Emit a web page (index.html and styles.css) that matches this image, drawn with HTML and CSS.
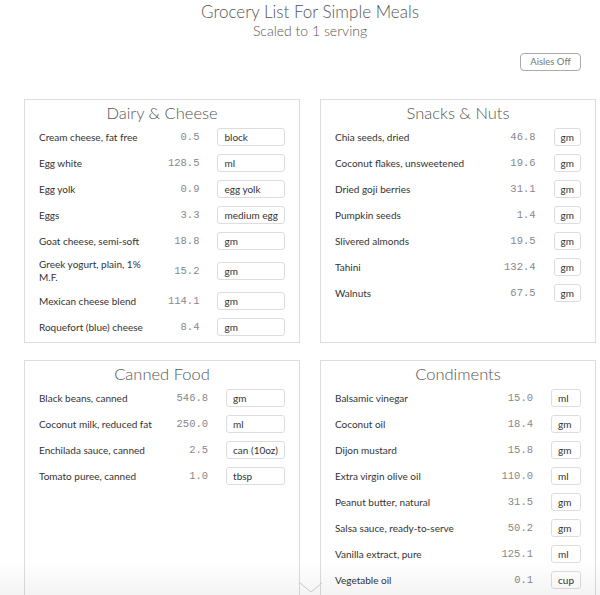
FILE: index.html
```html
<!DOCTYPE html>
<html>
<head>
<meta charset="utf-8">
<link rel="stylesheet" href="styles.css">
</head>
<body>
<div class="page">
  <header class="header">
    <h1 class="title">Grocery List For Simple Meals</h1>
    <div class="subtitle">Scaled to 1 serving</div>
  </header>
  <div class="toolbar">
    <button class="toggle">Aisles Off</button>
  </div>
  <main class="cards">
    <section class="card">
      <h2 class="card-title">Dairy &amp; Cheese</h2>
      <div class="items">
        <div class="name">Cream cheese, fat free</div><div class="qty">0.5</div><div class="unit">block</div>
        <div class="name">Egg white</div><div class="qty">128.5</div><div class="unit">ml</div>
        <div class="name">Egg yolk</div><div class="qty">0.9</div><div class="unit">egg yolk</div>
        <div class="name">Eggs</div><div class="qty">3.3</div><div class="unit">medium egg</div>
        <div class="name">Goat cheese, semi-soft</div><div class="qty">18.8</div><div class="unit">gm</div>
        <div class="name">Greek yogurt, plain, 1% M.F.</div><div class="qty">15.2</div><div class="unit">gm</div>
        <div class="name">Mexican cheese blend</div><div class="qty">114.1</div><div class="unit">gm</div>
        <div class="name">Roquefort (blue) cheese</div><div class="qty">8.4</div><div class="unit">gm</div>
      </div>
    </section>
    <section class="card">
      <h2 class="card-title">Snacks &amp; Nuts</h2>
      <div class="items">
        <div class="name">Chia seeds, dried</div><div class="qty">46.8</div><div class="unit">gm</div>
        <div class="name">Coconut flakes, unsweetened</div><div class="qty">19.6</div><div class="unit">gm</div>
        <div class="name">Dried goji berries</div><div class="qty">31.1</div><div class="unit">gm</div>
        <div class="name">Pumpkin seeds</div><div class="qty">1.4</div><div class="unit">gm</div>
        <div class="name">Slivered almonds</div><div class="qty">19.5</div><div class="unit">gm</div>
        <div class="name">Tahini</div><div class="qty">132.4</div><div class="unit">gm</div>
        <div class="name">Walnuts</div><div class="qty">67.5</div><div class="unit">gm</div>
      </div>
    </section>
    <section class="card">
      <h2 class="card-title">Canned Food</h2>
      <div class="items">
        <div class="name">Black beans, canned</div><div class="qty">546.8</div><div class="unit">gm</div>
        <div class="name">Coconut milk, reduced fat</div><div class="qty">250.0</div><div class="unit">ml</div>
        <div class="name">Enchilada sauce, canned</div><div class="qty">2.5</div><div class="unit">can (10oz)</div>
        <div class="name">Tomato puree, canned</div><div class="qty">1.0</div><div class="unit">tbsp</div>
      </div>
    </section>
    <section class="card">
      <h2 class="card-title">Condiments</h2>
      <div class="items">
        <div class="name">Balsamic vinegar</div><div class="qty">15.0</div><div class="unit">ml</div>
        <div class="name">Coconut oil</div><div class="qty">18.4</div><div class="unit">gm</div>
        <div class="name">Dijon mustard</div><div class="qty">15.8</div><div class="unit">gm</div>
        <div class="name">Extra virgin olive oil</div><div class="qty">110.0</div><div class="unit">ml</div>
        <div class="name">Peanut butter, natural</div><div class="qty">31.5</div><div class="unit">gm</div>
        <div class="name">Salsa sauce, ready-to-serve</div><div class="qty">50.2</div><div class="unit">gm</div>
        <div class="name">Vanilla extract, pure</div><div class="qty">125.1</div><div class="unit">ml</div>
        <div class="name">Vegetable oil</div><div class="qty">0.1</div><div class="unit">cup</div>
      </div>
    </section>
  </main>
</div>
<div class="fade">
  <svg class="chevron" width="24" height="12" viewBox="0 0 24 12"><path d="M1 1 L12 10 L23 1" fill="none" stroke="#c8c8c8" stroke-width="1"/></svg>
</div>
</body>
</html>
```

FILE: styles.css
```css
html, body {
  margin: 0;
  padding: 0;
  background: #fff;
  overflow: hidden;
  height: 595px;
}
body {
  font-family: "Lato", "Open Sans", sans-serif;
  color: #444;
}
.page {
  width: 572px;
  margin-left: 24px;
}
.header {
  text-align: center;
  padding-top: 2px;
  color: #555;
}
.title {
  margin: 0;
  font-size: 17px;
  line-height: 20px;
  font-weight: 300;
}
.subtitle {
  font-size: 14px;
  line-height: 18px;
  font-weight: 300;
}
.toolbar {
  display: flex;
  justify-content: flex-end;
  padding-right: 15px;
  margin-top: 13px;
}
.toggle {
  font-family: "Lato", sans-serif;
  font-size: 9.5px;
  color: #777;
  background: #fff;
  border: 1px solid #aaa;
  border-radius: 4px;
  height: 18px;
  width: 61px;
  padding: 0;
  line-height: 16px;
}
.cards {
  margin-top: 28px;
  display: grid;
  grid-template-columns: 276px 276px;
  column-gap: 20px;
  row-gap: 17px;
}
.card {
  border: 1px solid #ddd;
  padding: 2px 14px 0 14px;
  min-height: 240px;
}
.card-title {
  margin: 0;
  text-align: center;
  font-size: 16.5px;
  line-height: 22px;
  font-weight: 300;
  color: #555;
}
.items {
  display: grid;
  grid-template-columns: 1fr auto auto;
  grid-auto-rows: minmax(26px, auto);
  column-gap: 18px;
  align-items: center;
}
.name, .qty, .unit {
  font-size: 10px;
}
.name {
  line-height: 13px;
  padding: 4px 0;
  color: #333;
}
.qty {
  font-family: "Liberation Mono", monospace;
  font-size: 10.5px;
  color: #888;
  text-align: right;
}
.unit {
  height: 18px;
  box-sizing: border-box;
  border: 1px solid #ddd;
  border-radius: 3px;
  padding: 0 6px;
  line-height: 16px;
  color: #333;
  white-space: nowrap;
}
.fade {
  position: fixed;
  left: 0;
  right: 0;
  bottom: 0;
  height: 34px;
  background: linear-gradient(to bottom, rgba(0,0,0,0), rgba(0,0,0,0.045));
  display: flex;
  justify-content: center;
  align-items: flex-end;
  padding-left: 22px;
  box-sizing: border-box;
}
.chevron {
  display: block;
  margin-bottom: 1px;
}
```
